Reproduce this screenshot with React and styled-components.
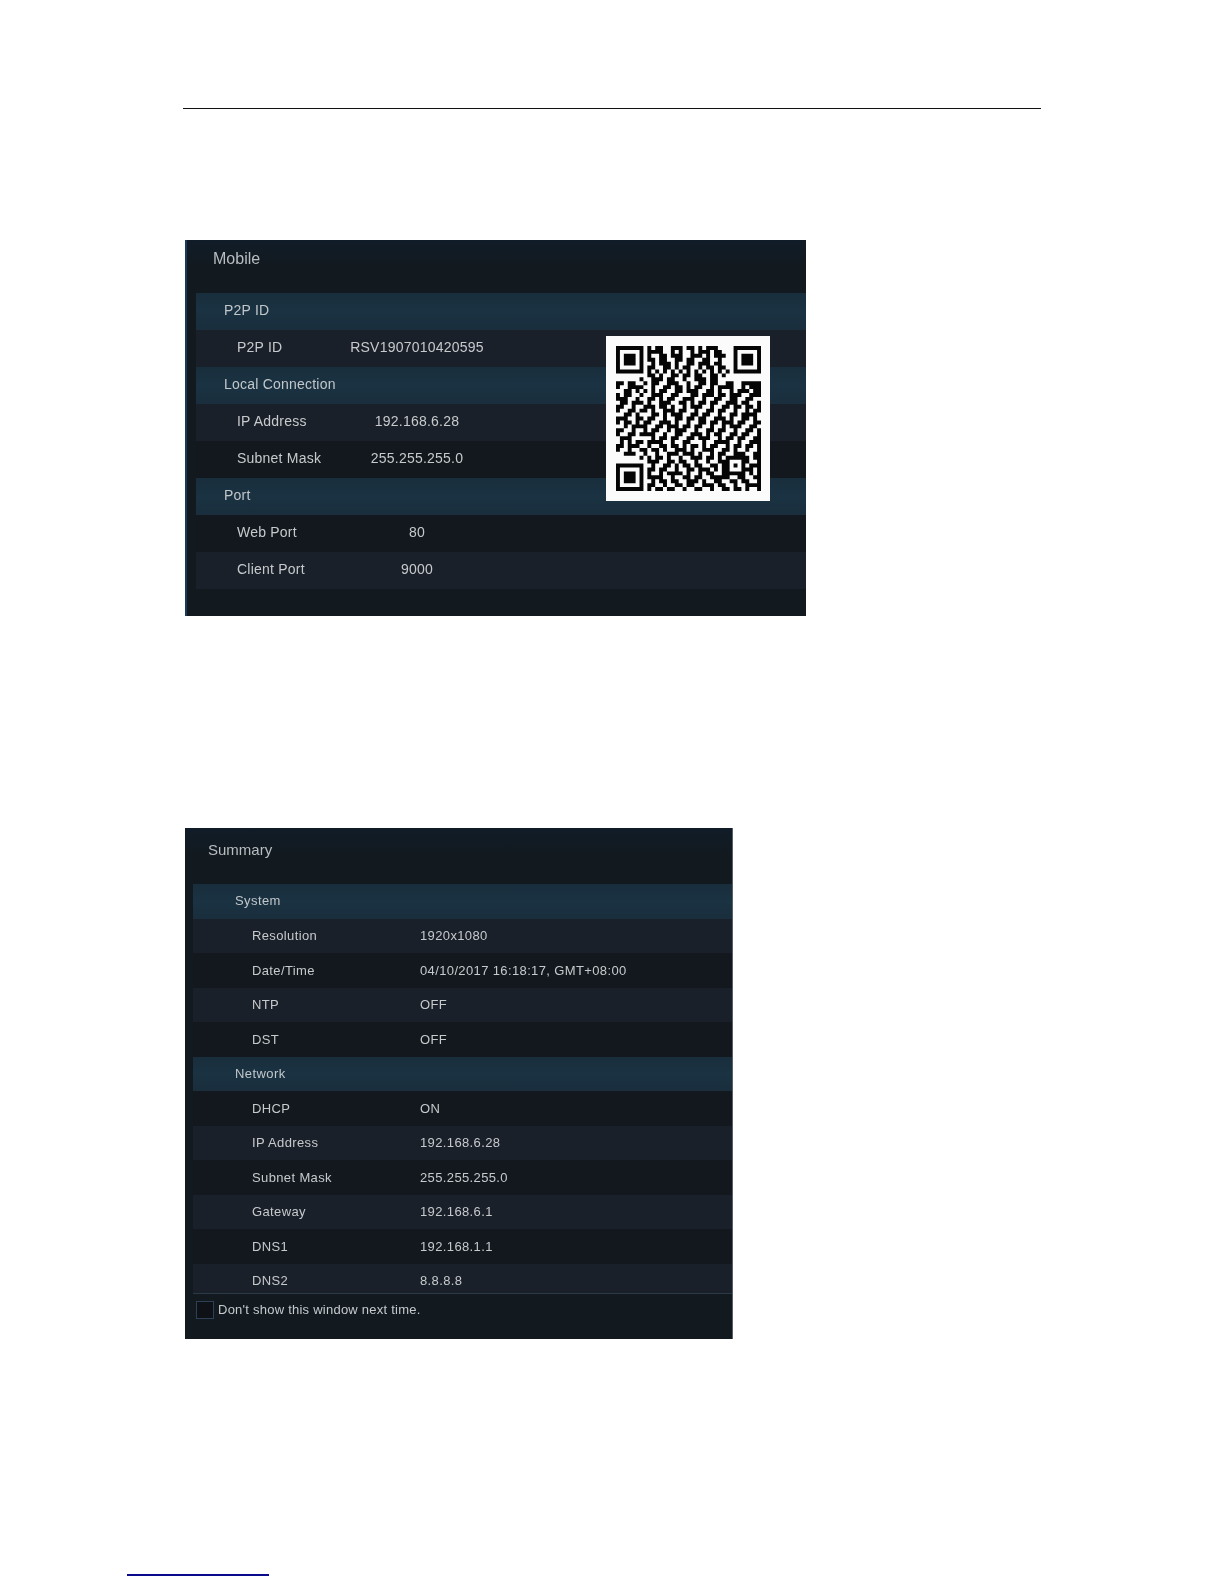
import React from "react";
import styled, { createGlobalStyle } from "styled-components";

const Global = createGlobalStyle`
  html, body { margin: 0; padding: 0; background: #fff; }
  body { font-family: "Liberation Sans", Arial, sans-serif; }
`;

const Page = styled.div`
  width: 1224px;
  height: 1584px;
  overflow: hidden;
  background: #fff;
  padding-top: 108px;
  box-sizing: border-box;
  display: flex;
  flex-direction: column;
  align-items: flex-start;
`;

const HeaderRule = styled.div`
  width: 858px;
  height: 1px;
  margin-left: 183px;
  background: #111;
`;

const Panel = styled.section`
  position: relative;
  box-sizing: border-box;
  margin-left: 185px;
  margin-top: ${(p) => p.$top}px;
  width: ${(p) => p.$width}px;
  height: ${(p) => p.$height}px;
  padding-left: ${(p) => p.$inset}px;
  background: linear-gradient(180deg, #101c28 0, #121a20 24px, #121a20 100%);
  border-left: ${(p) => (p.$edge ? "2px solid #1b3a58" : "none")};
  border-right: ${(p) => (p.$edge ? "none" : "1px solid #59606a")};
  display: flex;
  flex-direction: column;
  filter: blur(0.35px);
`;

const Title = styled.h2`
  margin: 0;
  margin-left: ${(p) => p.$left}px;
  height: ${(p) => p.$height}px;
  padding-top: ${(p) => p.$pad}px;
  box-sizing: border-box;
  font-size: ${(p) => p.$size}px;
  font-weight: 400;
  line-height: 20px;
  color: #b9bdc1;
`;

const Section = styled.div`
  height: ${(p) => p.$height}px;
  box-sizing: border-box;
  padding-left: ${(p) => p.$indent}px;
  padding-bottom: ${(p) => p.$lift}px;
  display: flex;
  align-items: center;
  flex: none;
  font-size: ${(p) => p.$size}px;
  letter-spacing: ${(p) => p.$track}px;
  color: #c2c7ca;
  background: linear-gradient(180deg, #192e3d 0, #1a3242 50%, #1a2e3d 100%);
`;

const Row = styled.div`
  height: ${(p) => p.$height}px;
  box-sizing: border-box;
  padding-bottom: ${(p) => p.$lift}px;
  flex: none;
  display: grid;
  grid-template-columns: ${(p) => p.$label}px ${(p) => p.$value}px;
  align-items: center;
  font-size: ${(p) => p.$size}px;
  letter-spacing: ${(p) => p.$track}px;
  color: #c6cacd;
  background: ${(p) => (p.$light ? "#1a2029" : "#12181e")};
`;

const Label = styled.span`
  padding-left: ${(p) => p.$indent}px;
  white-space: nowrap;
`;

const Value = styled.span`
  text-align: ${(p) => (p.$center ? "center" : "left")};
  white-space: nowrap;
`;

const RowList = styled.div`
  height: 409px;
  overflow: hidden;
  flex: none;
`;

const Footer = styled.label`
  flex: 1;
  border-top: 1px solid #2a3847;
  display: flex;
  align-items: flex-start;
  gap: 4px;
  padding: 7px 0 0 3px;
  font-size: 13px;
  line-height: 17px;
  letter-spacing: 0.24px;
  color: #c6cacd;
`;

const Checkbox = styled.span`
  width: 16px;
  height: 16px;
  flex: none;
  border: 1px solid #2d4057;
  background: #0e1216;
`;

const QrCard = styled.div`
  position: absolute;
  top: 96px;
  right: 36px;
  width: 164px;
  height: 165px;
  background: #fbfbfb;
  display: flex;
  align-items: center;
  justify-content: center;
`;

const FootnoteRule = styled.div`
  width: 142px;
  height: 2px;
  margin-left: 127px;
  margin-top: 235px;
  background: #0a0a8c;
`;

const DATA = [
  "0000000010110011101101011100000000000",
  "0000000011110010100101110110000000000",
  "0000000010011011100111010111000000000",
  "0000000011011001101100110010000000000",
  "0000000001011101001101110110000000000",
  "0000000011001101011001011011000000000",
  "0000000000000000000000000000000000000",
  "0000000011010011011011001101000000000",
  "0000000001110110010011101100000000000",
  "1101100101100111001001101100110011111",
  "1001111001001101101011001011110010111",
  "0011011101011001101110011010010111011",
  "1011001001110011000110111011011100111",
  "1110011011010110011100100110011001100",
  "0110110010011100110101101100111011001",
  "1100100111011010010111001001101101101",
  "1001101101001110110010011011001001011",
  "0011011001101011100110110010011011110",
  "1110010011001001101101100111010011010",
  "1011011110011101001001101101110110011",
  "0010110100110111011011001001011100110",
  "1100100101100101110010011011001001101",
  "1001101111001001100111010110011011001",
  "0111001001011011001101110010110110011",
  "0101011011110010011000100111100100111",
  "1101110010011011010110101100101101101",
  "1001001101101001110100111001101001001",
  "0011101100100111011101001011001110011",
  "0000000010110100100111011010110011011",
  "0000000011100110110010010011001101001",
  "0000000001001101011011001101011100111",
  "0000000011011001001101110101011001101",
  "0000000010010111101001011001110100101",
  "0000000011110010011011001111100110011",
  "0000000001011011001110100110011011001",
  "0000000011001001101100111011001001111",
  "0000000010110110010011001001101101001",
];

const SIZE = 37;

const buildMatrix = () => {
  const m = DATA.map((r) => r.padEnd(SIZE, "0").split("").map((c) => c === "1"));
  const finder = (ox, oy) => {
    for (let y = -1; y <= 7; y++) {
      for (let x = -1; x <= 7; x++) {
        const X = ox + x;
        const Y = oy + y;
        if (X < 0 || Y < 0 || X >= SIZE || Y >= SIZE) continue;
        const ring = x === 0 || x === 6 || y === 0 || y === 6;
        const core = x >= 2 && x <= 4 && y >= 2 && y <= 4;
        const inside = x >= 0 && x <= 6 && y >= 0 && y <= 6;
        m[Y][X] = inside && (ring || core);
      }
    }
  };
  finder(0, 0);
  finder(30, 0);
  finder(0, 30);
  for (let y = 28; y <= 32; y++) {
    for (let x = 28; x <= 32; x++) {
      const edge = x === 28 || x === 32 || y === 28 || y === 32;
      m[y][x] = edge || (x === 30 && y === 30);
    }
  }
  for (let i = 8; i < 29; i++) {
    m[6][i] = i % 2 === 0;
    m[i][6] = i % 2 === 0;
  }
  return m;
};

const QrCode = () => {
  let d = "";
  buildMatrix().forEach((row, y) =>
    row.forEach((on, x) => {
      if (on) d += `M${x} ${y}h1v1h-1z`;
    })
  );
  return (
    <svg width="145" height="145" viewBox="0 0 37 37" aria-label="QR code">
      <path d={d} fill="#050505" />
    </svg>
  );
};

const mobile = [
  { section: "P2P ID" },
  { label: "P2P ID", value: "RSV1907010420595", light: true },
  { section: "Local Connection" },
  { label: "IP Address", value: "192.168.6.28", light: true },
  { label: "Subnet Mask", value: "255.255.255.0" },
  { section: "Port" },
  { label: "Web Port", value: "80" },
  { label: "Client Port", value: "9000", light: true },
];

const summary = [
  { section: "System" },
  { label: "Resolution", value: "1920x1080", light: true },
  { label: "Date/Time", value: "04/10/2017 16:18:17, GMT+08:00" },
  { label: "NTP", value: "OFF", light: true },
  { label: "DST", value: "OFF" },
  { section: "Network" },
  { label: "DHCP", value: "ON" },
  { label: "IP Address", value: "192.168.6.28", light: true },
  { label: "Subnet Mask", value: "255.255.255.0" },
  { label: "Gateway", value: "192.168.6.1", light: true },
  { label: "DNS1", value: "192.168.1.1" },
  { label: "DNS2", value: "8.8.8.8", light: true },
];

export default function App() {
  return (
    <Page>
      <Global />
      <HeaderRule />

      <Panel $top={131} $width={621} $height={376} $inset={9} $edge>
        <Title $left={17} $height={53} $pad={9} $size={16}>Mobile</Title>
        {mobile.map((r, i) =>
          r.section ? (
            <Section key={i} $height={37} $indent={28} $size={14} $track={0.22} $lift={3}>{r.section}</Section>
          ) : (
            <Row key={i} $height={37} $label={111} $value={220} $size={14} $track={0.22} $lift={3} $light={r.light}>
              <Label $indent={41}>{r.label}</Label>
              <Value $center>{r.value}</Value>
            </Row>
          )
        )}
        <QrCard>
          <QrCode />
        </QrCard>
      </Panel>

      <Panel $top={212} $width={548} $height={511} $inset={8}>
        <Title $left={15} $height={56} $pad={12} $size={15}>Summary</Title>
        <RowList>
          {summary.map((r, i) =>
            r.section ? (
              <Section key={i} $height={34.5} $indent={42} $size={13} $track={0.42} $lift={1}>{r.section}</Section>
            ) : (
              <Row key={i} $height={34.5} $label={227} $value={312} $size={13} $track={0.37} $lift={0} $light={r.light}>
                <Label $indent={59}>{r.label}</Label>
                <Value>{r.value}</Value>
              </Row>
            )
          )}
        </RowList>
        <Footer>
          <Checkbox />
          Don&apos;t show this window next time.
        </Footer>
      </Panel>

      <FootnoteRule />
    </Page>
  );
}
